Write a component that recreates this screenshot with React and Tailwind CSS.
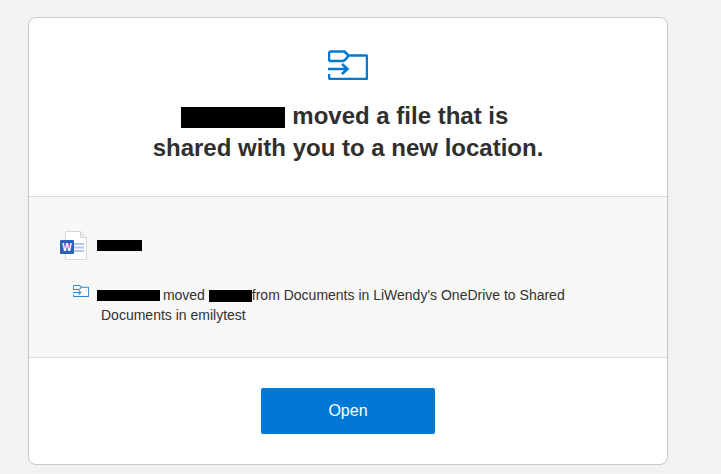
import React from "react";

function MoveIcon({ className, strokeWidth = 2 }) {
  return (
    <svg viewBox="0 0 40 30" fill="none" stroke="currentColor" strokeWidth={strokeWidth} className={className}>
      <path d="M1 11V3.500a2 2 0 0 1 2-2h13.500l4 4h17.500a1 1 0 0 1 1 1V28a1 1 0 0 1-1 1H3a2 2 0 0 1-2-2v-3" strokeLinejoin="round" />
      <path d="M1 11h13.500c2 0 3.500-1.500 6-5.500" />
      <path d="M0 19h19M14 14l5.500 5-5.500 5" />
    </svg>
  );
}

function WordIcon() {
  return (
    <svg viewBox="0 0 30 30" className="w-[30px] h-[30px]">
      <path d="M6.500 1.500h15l6 6v22h-21z" fill="#fff" stroke="#d6d6d6" />
      <path d="M21.500 1.500v6h6" fill="#eeeeee" stroke="#d6d6d6" />
      <path d="M15 13h10v2h-10zM15 16.500h10v2h-10zM15 20h10v2h-10z" fill="#b4c7e8" />
      <rect x="1" y="10" width="14" height="14" rx="1" fill="#2b5fb8" />
      <text x="8" y="21" textAnchor="middle" fontSize="10" fontWeight="700" fill="#fff" fontFamily="Liberation Sans">W</text>
    </svg>
  );
}

export default function App() {
  return (
    <div className="min-h-screen bg-[#f2f2f2] pt-[17px] pl-[28px] font-['Liberation_Sans',Arial,sans-serif]">
      <div className="w-[640px] h-[448px] bg-white border border-[#c8c8c8] rounded-[8px] flex flex-col overflow-hidden">
        <div className="h-[179px] shrink-0 flex flex-col items-center pt-[32px] border-b border-[#dcdcdc]">
          <MoveIcon className="w-[40px] h-[30px] text-[#0078d4]" strokeWidth={2.5} />
          <h1 className="mt-[20px] text-center text-[24px] leading-[32px] font-bold text-[#2f2f2f]">
            <span className="block pr-[7px]">
              <span className="inline-block w-[104px] h-[21px] mr-[1px] bg-black align-[-4px]"></span> moved a file that is
            </span>
            shared with you to a new location.
          </h1>
        </div>

        <div className="h-[161px] shrink-0 bg-[#f8f8f8] border-b border-[#dcdcdc] pl-[30px] pr-[60px] pt-[33px]">
          <div className="flex items-center gap-[8px]">
            <WordIcon />
            <span className="w-[45px] h-[11px] bg-black"></span>
          </div>
          <div className="flex mt-[25px] pl-[14px]">
            <MoveIcon className="w-[16px] h-[12px] text-[#2b88d8] shrink-0" strokeWidth={2.6} />
            <p className="ml-[12px] w-[480px] text-[14px] leading-[20px] text-[#323130]">
              <span className="inline-block w-[63px] h-[11px] bg-black align-[-1px] -ml-[4px] -mr-[1px]"></span> moved{" "}
              <span className="inline-block w-[43px] h-[12px] bg-black align-[-2px]"></span>from Documents in LiWendy's OneDrive to Shared Documents in emilytest
            </p>
          </div>
        </div>

        <div className="flex-1 flex justify-center pt-[30px]">
          <button className="w-[174px] h-[46px] bg-[#0078d4] text-white text-[16px] rounded-[2px]">Open</button>
        </div>
      </div>
    </div>
  );
}
